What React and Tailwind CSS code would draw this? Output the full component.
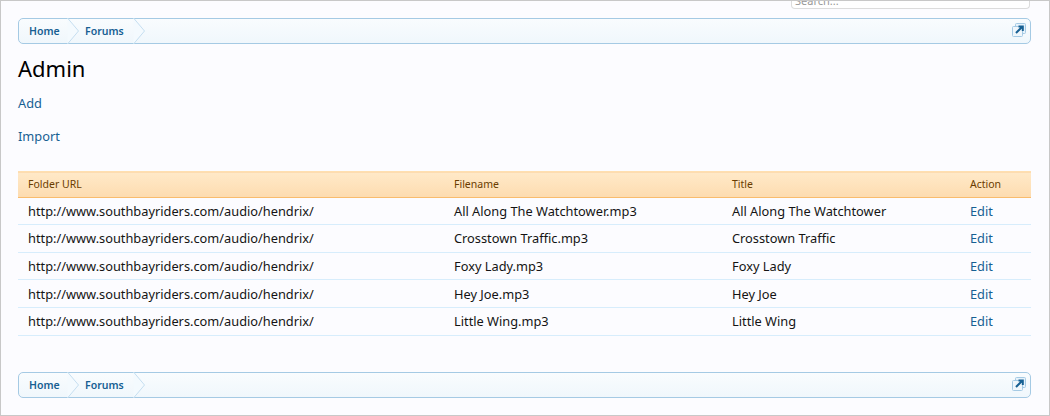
import React from "react";

const rows = [
  ["All Along The Watchtower.mp3", "All Along The Watchtower"],
  ["Crosstown Traffic.mp3", "Crosstown Traffic"],
  ["Foxy Lady.mp3", "Foxy Lady"],
  ["Hey Joe.mp3", "Hey Joe"],
  ["Little Wing.mp3", "Little Wing"],
];

// rows aren't all the same height in the reference, text sits 1px lower on some
const rowStyles = [
  "h-[27px] [&>td]:pt-[2px]",
  "h-[28px]",
  "h-[27px] [&>td]:pt-[2px]",
  "h-[28px] [&>td]:pt-[2px]",
  "h-[28px]",
];

function Chevron() {
  return (
    <svg width="12" height="26" viewBox="0 0 12 26" className="shrink-0">
      <path d="M0.5 0 L11.5 13 L0.5 26" fill="#f4fafe" stroke="#c5def0" strokeWidth="1" />
    </svg>
  );
}

function PopupIcon() {
  return (
    <svg width="14" height="14" viewBox="0 0 14 14">
      <rect x="3.5" y="0.5" width="10" height="10" rx="1" fill="#e6f2fb" stroke="#a5cae4" />
      <rect x="0.5" y="3.5" width="10" height="10" rx="1" fill="#f0f7fc" stroke="#a5cae4" />
      <path d="M4 10 L10 4 M6.5 3.5 H10.8 V8" fill="none" stroke="#176093" strokeWidth="2" />
    </svg>
  );
}

function Breadcrumb() {
  return (
    <div className="flex h-[26px] items-center rounded-[5px] border border-[#a5cae4] bg-gradient-to-b from-[#f9fcfe] to-[#f0f7fc] text-[10.5px] font-semibold text-[#176093]">
      <span className="w-[48px] pl-[10px] pt-[2px]">Home</span>
      <Chevron />
      <span className="w-[54px] pl-[6px] pt-[2px]">Forums</span>
      <Chevron />
      <span className="ml-auto mr-[4px] flex -translate-y-[1px]">
        <PopupIcon />
      </span>
    </div>
  );
}

export default function App() {
  return (
    <div
      className="h-[416px] w-[1050px] overflow-hidden border border-[#c8c8c8] bg-[#fcfcff] text-[12.8px] text-[#141414]"
      style={{ fontFamily: '"Noto Sans", "DejaVu Sans", sans-serif' }}
    >
      <div className="flex h-[8px] justify-end pr-[19px]">
        <div className="h-[8px] w-[239px] overflow-hidden rounded-b-[4px] border border-t-0 border-[#dcdcdc] bg-white pl-[3px] text-[11px] leading-[0px] text-[#999999]">
          Search...
        </div>
      </div>

      <div className="pl-[17px] pr-[18px] pt-[9px]">
        <Breadcrumb />

        <h1 className="mt-[10px] text-[22px] leading-[29px] text-black">Admin</h1>

        <div className="mt-[11px] leading-[18px] text-[#176093]">Add</div>
        <div className="mt-[15px] leading-[18px] text-[#176093]">Import</div>

        <table className="mt-[26px] w-full table-fixed border-collapse">
          <thead>
            <tr className="h-[26px] border-t border-b border-t-[#ffdfb0] border-b-[#f9bc6d] bg-gradient-to-b from-[#ffe9c8] to-[#fddcb0] text-left text-[10.5px] text-[#6a3c00]">
              <th className="w-[426px] pl-[10px] font-normal">Folder URL</th>
              <th className="w-[278px] pl-[10px] font-normal">Filename</th>
              <th className="w-[238px] pl-[10px] font-normal">Title</th>
              <th className="pl-[10px] font-normal">Action</th>
            </tr>
          </thead>
          <tbody>
            {rows.map(([file, title], i) => (
              <tr key={file} className={`${rowStyles[i]} border-b border-[#d7edfc]`}>
                <td className="pl-[10px]">http://www.southbayriders.com/audio/hendrix/</td>
                <td className="pl-[10px]">{file}</td>
                <td className="pl-[10px]">{title}</td>
                <td className="pl-[10px] text-[#176093]">Edit</td>
              </tr>
            ))}
          </tbody>
        </table>

        <div className="mt-[36px]">
          <Breadcrumb />
        </div>
      </div>
    </div>
  );
}
